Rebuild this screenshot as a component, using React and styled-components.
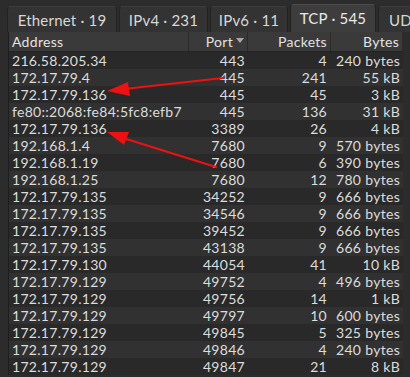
import React from "react";
import styled, { createGlobalStyle } from "styled-components";

const Global = createGlobalStyle`
  html, body { margin: 0; padding: 0; }
  body {
    background: #2c2c2c;
    font-family: Lato, "Noto Sans", sans-serif;
    color: #dedede;
    width: 410px;
    height: 377px;
    overflow: hidden;
  }
`;

const Page = styled.div`
  position: relative;
  width: 410px;
  height: 377px;
  overflow: hidden;
  background: #2c2c2c;
`;

const TabBar = styled.div`
  display: flex;
  align-items: flex-end;
  gap: 2px;
  height: 32px;
  padding-left: 7px;
  box-sizing: border-box;
  overflow: hidden;
`;

const Tab = styled.div`
  flex: none;
  box-sizing: border-box;
  width: ${(p) => p.$w}px;
  height: ${(p) => (p.$active ? 28 : 26)}px;
  padding-bottom: ${(p) => (p.$active ? 2 : 0)}px;
  display: flex;
  align-items: center;
  justify-content: ${(p) => (p.$clip ? "flex-start" : "center")};
  padding-left: ${(p) => (p.$clip ? 10 : 0)}px;
  white-space: nowrap;
  font-size: 15px;
  line-height: 20px;
  letter-spacing: 0.2px;
  color: ${(p) => (p.$active ? "#e8e8e8" : "#d8d8d8")};
  background: ${(p) => (p.$active ? "#3d3d3d" : "#333333")};
  border: 1px solid #222222;
  border-bottom: none;
  border-top-color: ${(p) => (p.$active ? "#4a4a4a" : "#3c3c3c")};
  border-radius: 4px 4px 0 0;
`;

const Table = styled.div`
  margin-left: 8px;
  width: 395px;
  border-left: 1px solid #1e1e1e;
  box-sizing: border-box;
`;

const cols = "180px 59px 83px 72px";

const HeaderRow = styled.div`
  display: grid;
  grid-template-columns: ${cols};
  height: 20px;
  background: #3a3a3a;
  border-bottom: 1px solid #222;
  box-sizing: border-box;
`;

const HeadCell = styled.div`
  display: flex;
  align-items: center;
  justify-content: ${(p) => (p.$right ? "flex-end" : "flex-start")};
  padding: 0 ${(p) => (p.$right ? 3 : 0)}px 0 ${(p) => (p.$right ? 0 : 3)}px;
  font-size: 14px;
  line-height: 19px;
  letter-spacing: 0.3px;
  color: #e2e2e2;
  border-right: 1px solid #2a2a2a;
  white-space: nowrap;
  overflow: hidden;
`;

const SortArrow = styled.span`
  display: inline-block;
  width: 0;
  height: 0;
  margin-left: 3px;
  margin-top: -3px;
  border-left: 4px solid transparent;
  border-right: 4px solid transparent;
  border-top: 5px solid #a8a8a8;
`;

const Row = styled.div`
  display: grid;
  grid-template-columns: ${cols};
  height: 17px;
  background: ${(p) => (p.$alt ? "#313131" : "#292929")};
`;

const Cell = styled.div`
  display: flex;
  align-items: center;
  justify-content: ${(p) => (p.$right ? "flex-end" : "flex-start")};
  padding: 0 ${(p) => (p.$right ? p.$pr ?? 3 : 0)}px 0 ${(p) => (p.$right ? 0 : 3)}px;
  font-size: 14px;
  line-height: 17px;
  height: 17px;
  letter-spacing: 0.3px;
  color: #dcdcdc;
  white-space: nowrap;
`;

const Overlay = styled.svg`
  position: absolute;
  left: 0;
  top: 0;
  pointer-events: none;
`;

const tabs = [
  { label: "Ethernet · 19", w: 110 },
  { label: "IPv4 · 231", w: 89 },
  { label: "IPv6 · 11", w: 78 },
  { label: "TCP · 545", w: 86, active: true },
  { label: "UDP · 40", w: 80, clip: true },
];

const rows = [
  ["216.58.205.34", "443", "4", "240 bytes"],
  ["172.17.79.4", "445", "241", "55 kB"],
  ["172.17.79.136", "445", "45", "3 kB"],
  ["fe80::2068:fe84:5fc8:efb7", "445", "136", "31 kB"],
  ["172.17.79.136", "3389", "26", "4 kB"],
  ["192.168.1.4", "7680", "9", "570 bytes"],
  ["192.168.1.19", "7680", "6", "390 bytes"],
  ["192.168.1.25", "7680", "12", "780 bytes"],
  ["172.17.79.135", "34252", "9", "666 bytes"],
  ["172.17.79.135", "34546", "9", "666 bytes"],
  ["172.17.79.135", "39452", "9", "666 bytes"],
  ["172.17.79.135", "43138", "9", "666 bytes"],
  ["172.17.79.130", "44054", "41", "10 kB"],
  ["172.17.79.129", "49752", "4", "496 bytes"],
  ["172.17.79.129", "49756", "14", "1 kB"],
  ["172.17.79.129", "49797", "10", "600 bytes"],
  ["172.17.79.129", "49845", "5", "325 bytes"],
  ["172.17.79.129", "49846", "4", "240 bytes"],
  ["172.17.79.129", "49847", "21", "8 kB"],
];

export default function App() {
  return (
    <Page>
      <Global />
      <TabBar>
        {tabs.map((t) => (
          <Tab key={t.label} $w={t.w} $active={t.active} $clip={t.clip}>
            {t.label}
          </Tab>
        ))}
      </TabBar>
      <Table>
        <HeaderRow>
          <HeadCell>Address</HeadCell>
          <HeadCell $right>
            Port
            <SortArrow />
          </HeadCell>
          <HeadCell $right>Packets</HeadCell>
          <HeadCell $right>Bytes</HeadCell>
        </HeaderRow>
        {rows.map((r, i) => (
          <Row key={i} $alt={i % 2 === 1}>
            <Cell>{r[0]}</Cell>
            <Cell $right $pr={3}>{r[1]}</Cell>
            <Cell $right $pr={4}>{r[2]}</Cell>
            <Cell $right $pr={3}>{r[3]}</Cell>
          </Row>
        ))}
      </Table>
      <Overlay width="410" height="377" viewBox="0 0 410 377">
        <g stroke="#ee1111" strokeWidth="2.2" fill="none" strokeLinecap="round">
          <line x1="223" y1="78" x2="124" y2="89" />
          <line x1="216" y1="167" x2="123" y2="138" />
        </g>
        <g fill="#ee1111">
          <polygon points="107,91 128,82 130,96" />
          <polygon points="107,132 129,132 124,145" />
        </g>
      </Overlay>
    </Page>
  );
}
